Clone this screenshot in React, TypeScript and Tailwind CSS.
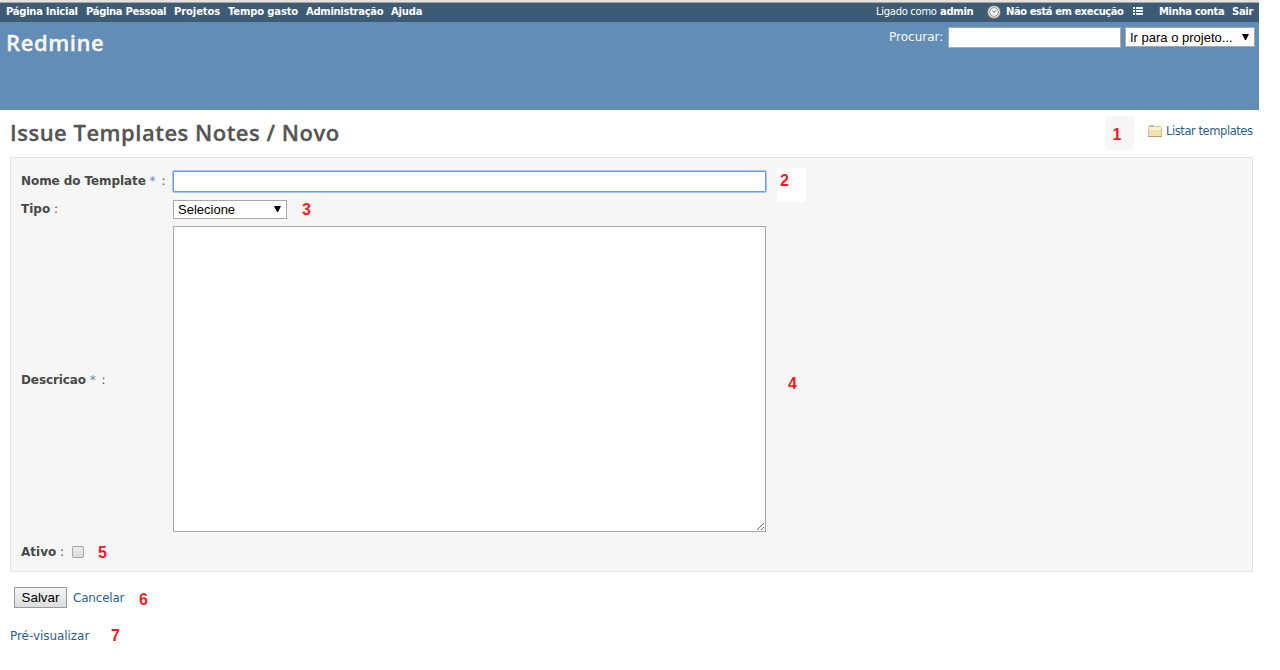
import React from "react";

function Marker({ n, className }: { n: number; className: string }) {
  return (
    <span className={`font-['Liberation_Sans',sans-serif] text-[16px] leading-[18px] font-bold text-[#ed1c24] ${className}`}>
      {n}
    </span>
  );
}

function Arrow() {
  return (
    <svg width="7" height="6" viewBox="0 0 7 6" className="mb-[1px] shrink-0">
      <path d="M0 0H7L4 6H3Z" fill="#000" />
    </svg>
  );
}

function Clock() {
  return (
    <svg width="14" height="14" viewBox="0 0 14 14" className="-ml-px shrink-0">
      <circle cx="7" cy="7" r="6.6" fill="#b39a78" />
      <circle cx="7" cy="7" r="5.8" fill="#f2e8d8" />
      <circle cx="7" cy="7" r="4.3" fill="#f7fafc" stroke="#8193a5" strokeWidth="1" />
      <path d="M5.5 5.5L7 7.5L9.2 5.2" fill="none" stroke="#4c5d6e" strokeWidth="0.9" />
    </svg>
  );
}

function ListIcon() {
  return (
    <svg width="10" height="8" viewBox="0 0 10 8" className="-mt-px shrink-0" shapeRendering="crispEdges">
      <path d="M0 0H2V2H0ZM3 0H10V2H3ZM0 3H2V5H0ZM3 3H10V5H3ZM0 6H2V8H0ZM3 6H10V8H3Z" fill="#eef2f5" />
    </svg>
  );
}

function Folder() {
  return (
    <svg width="14" height="12" viewBox="0 0 14 12" className="shrink-0">
      <path d="M.5 11V1.5Q.5.5 1.5.5H6.5L7.5 1.5H12.5Q13.5 1.5 13.5 2.5V11Z" fill="#f8edc5" stroke="#d8c08c" />
      <path d="M2 1.5H6" stroke="#68c5e8" />
      <path d="M1 4H13V11H1Z" fill="#f1dfad" />
      <path d="M1 4.5H13" stroke="#fbf3d6" />
      <path d="M0 11.5H14" stroke="#bd9b64" />
    </svg>
  );
}

const menu = [
  { label: "Página Inicial", width: "w-[80px] tracking-[-0.27px]" },
  { label: "Página Pessoal", width: "w-[88px] tracking-[-0.33px]" },
  { label: "Projetos", width: "w-[54px] tracking-[-0.1px]" },
  { label: "Tempo gasto", width: "w-[78px] tracking-[-0.15px]" },
  { label: "Administração", width: "w-[85px] tracking-[-0.3px]" },
  { label: "Ajuda", width: "w-[40px] tracking-[-0.2px]" },
];

export default function App() {
  return (
    <div className="h-[670px] w-[1280px] overflow-hidden bg-white font-['DejaVu_Sans',sans-serif] text-[12px] whitespace-nowrap text-[#484848]">
      <div className="w-[1259px]">
        <div className="h-[3px] border-b border-[#a5a5a5] bg-[#e2e2e2]" />
        <nav className="flex h-[19px] items-start bg-[#3e5b76] pl-[6px] text-[10px] leading-[17px] font-bold text-white">
          {menu.map((m) => (
            <a key={m.label} className={`shrink-0 ${m.width}`}>{m.label}</a>
          ))}
          <div className="ml-auto flex items-center">
            <span className="w-[64px] font-normal tracking-[-0.3px]">Ligado como</span>
            <a className="w-[48px] tracking-[-0.3px]">admin</a>
            <Clock />
            <a className="ml-[5px] w-[127px] tracking-[-0.45px]">Não está em execução</a>
            <ListIcon />
            <a className="ml-[16px] w-[73px] tracking-[-0.35px]">Minha conta</a>
            <a className="w-[27px] tracking-[-0.3px]">Sair</a>
          </div>
        </nav>
        <header className="flex h-[88px] items-start justify-between bg-[#628db6] pl-[6px] text-[#f8f8f8]">
          <h1 className="mt-[5px] font-['Open_Sans',sans-serif] text-[22px] leading-[30px] font-semibold tracking-[0.6px] [-webkit-text-stroke:0.3px_currentColor]">Redmine</h1>
          <div className="mt-[5px] mr-[4px] flex">
            <label className="w-[59px] leading-[20px]">Procurar:</label>
            <input className="h-[21px] w-[173px] border border-[#a9a9a9] bg-white" />
            <div className="ml-[4px] flex h-[20px] w-[130px] items-center justify-between border border-[#a9a9a9] bg-white pr-[5px] pl-[4px] font-['Liberation_Sans',sans-serif] text-[13px] leading-[18px] text-black">
              <span className="pt-[2px]">Ir para o projeto...</span>
              <Arrow />
            </div>
          </div>
        </header>

        <main className="pr-[6px] pl-[10px]">
          <div className="flex h-[47px] items-start">
            <h2 className="mt-[7px] font-['Open_Sans',sans-serif] text-[22px] leading-[30px] font-semibold tracking-[0.5px] text-[#555] [-webkit-text-stroke:0.3px_currentColor]">Issue Templates Notes / Novo</h2>
            <div className="mt-[6px] ml-auto flex h-[34px] w-[29px] items-center justify-center bg-[#f6f6f6] pt-[3px] pr-[5px]">
              <Marker n={1} className="" />
            </div>
            <a className="mt-[12px] ml-[14px] flex w-[105px] items-center gap-[4px] text-[11.5px] leading-[18px] tracking-[-0.43px] text-[#2a5f93]">
              <Folder />
              Listar templates
            </a>
          </div>

          <form>
            <section className="h-[415px] border border-[#e4e4e4] bg-[#f6f6f6] pt-[10px] pl-[10px]">
              <div className="flex h-[32px] items-start">
                <label className="w-[151px] pt-[3px] leading-[20px]">
                  <b className="tracking-[-0.08px]">Nome do Template</b> <span className="mr-[2px] text-[#628db6]">*</span> :
                </label>
                <input className="mt-[2px] h-[23px] w-[595px] rounded-[2px] border border-[#a6c6fa] bg-white ring-1 ring-[#6f98da] ring-inset" />
                <div className="ml-[10px] h-[34px] w-[29px] bg-white pt-[4px] pl-[3px]">
                  <Marker n={2} className="block" />
                </div>
              </div>
              <div className="flex h-[26px] items-start">
                <label className="w-[152px] leading-[18px]"><b>Tipo</b> :</label>
                <div className="flex h-[19px] w-[114px] items-center justify-between border border-[#a9a9a9] bg-white pr-[5px] pl-[4px] font-['Liberation_Sans',sans-serif] text-[13px] text-black">
                  <span>Selecione</span>
                  <Arrow />
                </div>
                <Marker n={3} className="mt-px ml-[15px]" />
              </div>
              <div className="flex h-[306px] items-center">
                <label className="w-[152px] pt-[2px] leading-[18px]"><b className="tracking-[-0.1px]">Descricao</b> <span className="mr-[2px] text-[#628db6]">*</span> :</label>
                <div className="flex h-[306px] w-[593px] items-end justify-end border border-[#a9a9a9] bg-white">
                  <svg width="9" height="9" viewBox="0 0 9 9" shapeRendering="crispEdges">
                    <path d="M1 7h1v1h-1zM2 6h1v1h-1zM3 5h1v1h-1zM4 4h1v1h-1zM5 3h1v1h-1zM6 2h1v1h-1zM7 1h1v1h-1zM5 7h1v1h-1zM6 6h1v1h-1zM7 5h1v1h-1z" fill="#666" />
                  </svg>
                </div>
                <Marker n={4} className="mt-[10px] ml-[22px]" />
              </div>
              <div className="mt-[11px] flex h-[18px] items-center">
                <label className="w-[51px]"><b>Ativo</b> :</label>
                <span className="h-[12px] w-[12px] rounded-[2px] border border-[#a5a5a5] bg-linear-to-b from-[#ededed] to-[#dcdcdc]" />
                <Marker n={5} className="mt-[2px] ml-[14px]" />
              </div>
            </section>

            <div className="mt-[15px] flex h-[21px] items-center pl-[4px]">
              <button type="button" className="h-[21px] w-[53px] border border-[#999] bg-linear-to-b from-[#f5f5f5] to-[#dddddd] font-['Liberation_Sans',sans-serif] text-[13.33px] leading-[19px] text-black">Salvar</button>
              <a className="ml-[6px] w-[66px] tracking-[-0.2px] text-[#2a5f93]">Cancelar</a>
              <Marker n={6} className="mt-[4px]" />
            </div>
            <div className="mt-[18px] flex h-[20px] items-center">
              <a className="w-[101px] tracking-[-0.05px] text-[#2a5f93]">Pré-visualizar</a>
              <Marker n={7} className="" />
            </div>
          </form>
        </main>
      </div>
    </div>
  );
}
